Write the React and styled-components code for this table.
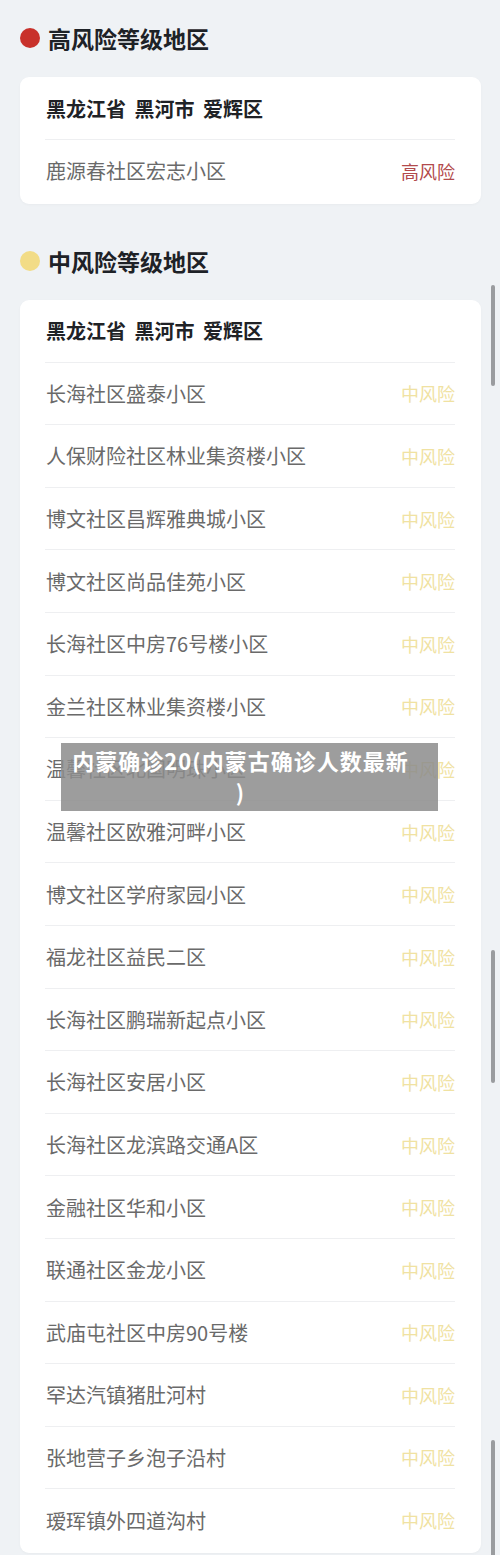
import React from 'react';
import styled, { createGlobalStyle } from 'styled-components';

const GlobalStyle = createGlobalStyle`
  html, body {
    margin: 0;
    padding: 0;
    background: #eff2f5;
  }
  body {
    font-family: "Noto Sans CJK SC", "Noto Sans", sans-serif;
  }
`;

const Page = styled.div`
  position: relative;
  width: 500px;
  height: 1555px;
  overflow: hidden;
  background: #eff2f5;
  padding: 0 19px 0 20px;
  box-sizing: border-box;
`;

const Section = styled.section`
  display: flex;
  flex-direction: column;
  padding-top: ${props => props.$top}px;
`;

const Title = styled.h2`
  display: flex;
  align-items: center;
  gap: 8px;
  margin: 0 0 24px;
  height: 30px;
  font-size: 23px;
  font-weight: 700;
  color: #1e2227;
  letter-spacing: 0;
`;

const Dot = styled.span`
  width: 20px;
  height: 20px;
  border-radius: 50%;
  background: ${props => props.$color};
  flex-shrink: 0;
`;

const Card = styled.div`
  background: #ffffff;
  border-radius: 9px;
  padding: 0 26px 2px 25px;
  box-shadow: 0 1px 3px rgba(0, 0, 0, 0.03);
`;

const Header = styled.div`
  height: 62px;
  display: flex;
  align-items: center;
  padding-left: 1px;
  font-size: 20px;
  font-weight: 700;
  color: #202226;
  word-spacing: 4px;
`;

const Row = styled.div`
  height: 61.6px;
  border-top: 1px solid #eeeff1;
  display: flex;
  align-items: center;
  justify-content: space-between;
  padding-left: 1px;
`;

const Place = styled.span`
  font-size: 20px;
  color: #6a6a6a;
`;

const Level = styled.span`
  font-size: 18px;
  color: ${props => props.$color};
`;

const Banner = styled.div`
  position: absolute;
  left: 61px;
  top: 743px;
  width: 377px;
  height: 68px;
  box-sizing: border-box;
  padding: 2px 18px 0 0;
  display: flex;
  justify-content: center;
  background: rgba(140, 140, 140, 0.85);
`;

const BannerText = styled.div`
  width: 340px;
  color: #ffffff;
  font-size: 22px;
  font-weight: 700;
  line-height: 31px;
  letter-spacing: 1px;
  text-align: center;
  word-break: break-all;
  line-break: anywhere;
`;

const ScrollThumb = styled.div`
  position: absolute;
  right: 5px;
  width: 4px;
  border-radius: 2px;
  background: #9a9c9f;
`;

const highRows = ['鹿源春社区宏志小区'];

const midRows = [
  '长海社区盛泰小区',
  '人保财险社区林业集资楼小区',
  '博文社区昌辉雅典城小区',
  '博文社区尚品佳苑小区',
  '长海社区中房76号楼小区',
  '金兰社区林业集资楼小区',
  '温馨社区北国明珠小区',
  '温馨社区欧雅河畔小区',
  '博文社区学府家园小区',
  '福龙社区益民二区',
  '长海社区鹏瑞新起点小区',
  '长海社区安居小区',
  '长海社区龙滨路交通A区',
  '金融社区华和小区',
  '联通社区金龙小区',
  '武庙屯社区中房90号楼',
  '罕达汽镇猪肚河村',
  '张地营子乡泡子沿村',
  '瑷珲镇外四道沟村',
];

const RiskSection = ({ top, dot, title, level, levelColor, rows }) => (
  <Section $top={top}>
    <Title>
      <Dot $color={dot} />
      {title}
    </Title>
    <Card>
      <Header>黑龙江省 黑河市 爱辉区</Header>
      {rows.map(name => (
        <Row key={name}>
          <Place>{name}</Place>
          <Level $color={levelColor}>{level}</Level>
        </Row>
      ))}
    </Card>
  </Section>
);

const App = () => (
  <>
    <GlobalStyle />
    <Page>
      <RiskSection
        top={23}
        dot="#c8312b"
        title="高风险等级地区"
        level="高风险"
        levelColor="#b24a4c"
        rows={highRows}
      />
      <RiskSection
        top={42}
        dot="#f2dc86"
        title="中风险等级地区"
        level="中风险"
        levelColor="#f0e2a2"
        rows={midRows}
      />
      <Banner>
        <BannerText>内蒙确诊20(内蒙古确诊人数最新)</BannerText>
      </Banner>
      <ScrollThumb style={{ top: 285, height: 101 }} />
      <ScrollThumb style={{ top: 950, height: 133 }} />
      <ScrollThumb style={{ top: 1440, height: 120 }} />
    </Page>
  </>
);

export default App;
